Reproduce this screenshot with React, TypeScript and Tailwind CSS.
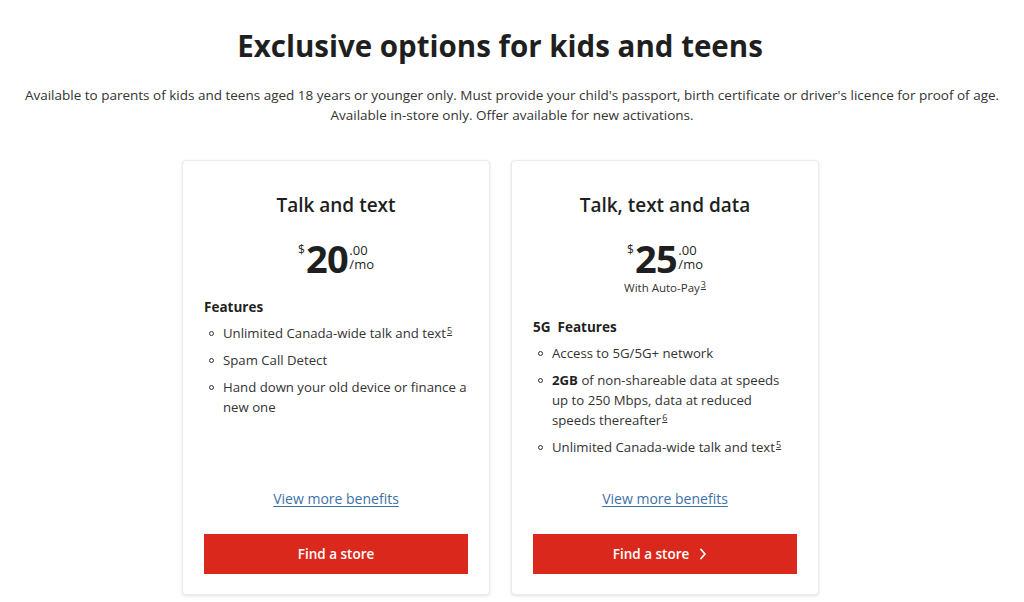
import React from "react";

type Feature = { content: React.ReactNode };

const FONT = { fontFamily: '"Open Sans", "Liberation Sans", sans-serif' };

function Sup({ n }: { n: number }) {
  return <sup className="text-[9px] underline ml-[1px] top-[-0.5em]">{n}</sup>;
}

function Price({ dollars }: { dollars: string }) {
  return (
    <div className="flex items-start justify-center text-[#1f1f1f]">
      <span className="text-[12px] leading-none mt-[6px] mr-[1px]">$</span>
      <span className="text-[38px] font-bold leading-[40px] tracking-[-0.5px]">{dollars}</span>
      <span className="flex flex-col text-[13px] leading-[14px] mt-[5px] ml-[1px]">
        <span>.00</span>
        <span>/mo</span>
      </span>
    </div>
  );
}

function PlanCard({
  title,
  dollars,
  note,
  heading,
  features,
  chevron,
}: {
  title: string;
  dollars: string;
  note?: React.ReactNode;
  heading: React.ReactNode;
  features: Feature[];
  chevron?: boolean;
}) {
  return (
    <div className="w-[308px] flex flex-col rounded-[4px] border border-[#ebebeb] bg-white shadow-[0_1px_3px_rgba(0,0,0,0.12)] px-[21px] pt-[30px] pb-[20px]">
      <h3 className="text-center text-[19px] font-semibold leading-[28px] text-[#1f1f1f]">{title}</h3>
      <div className="mt-[19px]">
        <Price dollars={dollars} />
      </div>
      {note && <p className="text-center text-[11.5px] leading-[14px] text-[#333] mt-[3px]">{note}</p>}
      <p className={`text-[13.5px] font-bold text-[#1f1f1f] leading-[20px] ${note ? "mt-[22px]" : "mt-[19px]"}`}>
        {heading}
      </p>
      <ul className="mt-[6px] flex flex-col gap-[7px]">
        {features.map((f, i) => (
          <li key={i} className="flex text-[13.2px] leading-[20px] text-[#333]">
            <span className="w-[19px] shrink-0 pl-[5px] pt-[8px]">
              <span className="block w-[5px] h-[5px] rounded-full border border-[#333]" />
            </span>
            <span>{f.content}</span>
          </li>
        ))}
      </ul>
      <div className="mt-auto pt-[20px] text-center">
        <a href="#" className="text-[14px] leading-[20px] text-[#3d72a8] underline underline-offset-2">
          View more benefits
        </a>
      </div>
      <button className="mt-[24px] h-[40px] w-full bg-[#da291c] text-white text-[13.5px] font-semibold flex items-center justify-center gap-[10px]">
        Find a store
        {chevron && (
          <svg width="8" height="12" viewBox="0 0 8 12" fill="none" className="mr-[10px]">
            <path d="M2 1.5L6 6L2 10.5" stroke="white" strokeWidth="1.8" strokeLinecap="round" strokeLinejoin="round" />
          </svg>
        )}
      </button>
    </div>
  );
}

export default function App() {
  return (
    <div className="w-[1024px] h-[602px] bg-white overflow-hidden" style={FONT}>
      <h1 className="pr-[24px] pt-[26px] text-center text-[29.5px] font-bold leading-[40px] text-[#1f1f1f]">
        Exclusive options for kids and teens
      </h1>
      <p className="mt-[19px] text-center text-[13.5px] leading-[20px] text-[#333]">
        Available to parents of kids and teens aged 18 years or younger only. Must provide your child's passport, birth certificate or driver's licence for proof of age.
        <br />
        Available in-store only. Offer available for new activations.
      </p>
      <div className="mt-[35px] flex justify-center gap-[21px] pr-[23px] h-[435px]">
        <PlanCard
          title="Talk and text"
          dollars="20"
          heading="Features"
          features={[
            { content: <>Unlimited Canada-wide talk and text<Sup n={5} /></> },
            { content: "Spam Call Detect" },
            { content: "Hand down your old device or finance a new one" },
          ]}
        />
        <PlanCard
          title="Talk, text and data"
          dollars="25"
          note={<>With Auto-Pay<Sup n={3} /></>}
          heading={<>5G&nbsp; Features</>}
          chevron
          features={[
            { content: "Access to 5G/5G+ network" },
            { content: <><b className="text-[#1f1f1f]">2GB</b> of non-shareable data at speeds up to 250 Mbps, data at reduced speeds thereafter<Sup n={6} /></> },
            { content: <>Unlimited Canada-wide talk and text<Sup n={5} /></> },
          ]}
        />
      </div>
    </div>
  );
}
